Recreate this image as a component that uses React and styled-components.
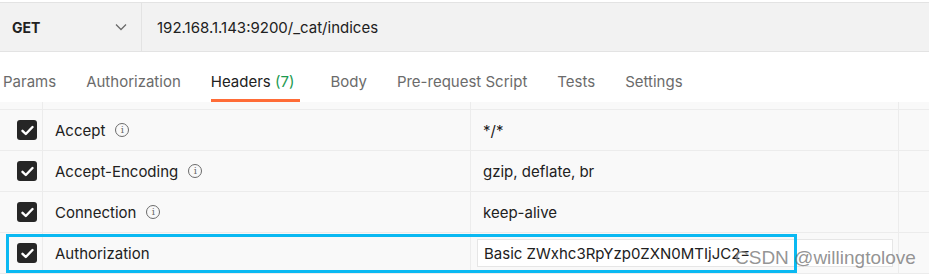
import styled, { createGlobalStyle } from "styled-components";

const GlobalStyle = createGlobalStyle`
  body {
    margin: 0;
    background: #ffffff;
    font-family: Inter, "Noto Sans", "Liberation Sans", sans-serif;
    font-size: 15px;
    color: #212121;
  }
`;

const Page = styled.div`
  width: 929px;
  height: 279px;
  overflow: hidden;
  padding-top: 2px;
  box-sizing: border-box;
  position: relative;
`;

const UrlBar = styled.div`
  display: flex;
  height: 50px;
  background: #f2f2f2;
  border-top: 1px solid #e3e3e3;
  border-bottom: 1px solid #e3e3e3;
  box-sizing: border-box;
`;

const MethodSelect = styled.div`
  width: 142px;
  flex: 0 0 142px;
  display: flex;
  align-items: center;
  justify-content: space-between;
  padding: 0 14px 0 12px;
  box-sizing: border-box;
  border-right: 1px solid #e3e3e3;
  font-weight: 700;
  font-size: 14px;
  color: #212121;
`;

const UrlText = styled.div`
  display: flex;
  align-items: center;
  padding-left: 15px;
  color: #212121;
`;

const Tabs = styled.div`
  display: flex;
  gap: 30px;
  height: 50px;
  padding-left: 3px;
  align-items: center;
  padding-top: 10px;
  box-sizing: border-box;
`;

const Tab = styled.div`
  position: relative;
  color: ${(p) => (p.$active ? "#212121" : "#6b6b6b")};
  line-height: 20px;

  &::after {
    content: "";
    display: ${(p) => (p.$active ? "block" : "none")};
    position: absolute;
    left: 0;
    right: 0;
    bottom: -10px;
    height: 3px;
    background: #ff6c37;
  }
`;

const Count = styled.span`
  color: #1c9a4f;
  margin-right: 6px;
`;

const Table = styled.div`
  background: #f9f9f9;
`;

const Row = styled.div`
  display: grid;
  grid-template-columns: 43px 428px 428px 30px;
  height: ${(p) => p.$h || 41}px;
  border-bottom: 1px solid #ececec;
  box-sizing: border-box;
`;

const Cell = styled.div`
  display: flex;
  align-items: center;
  border-right: ${(p) => (p.$last ? "none" : "1px solid #ececec")};
  padding-left: ${(p) => p.$pad || 0}px;
  color: #212121;
  min-width: 0;
`;

const Checkbox = styled.div`
  width: 20px;
  height: 20px;
  border-radius: 3px;
  background: #262626;
  display: flex;
  align-items: center;
  justify-content: center;
`;

const InfoIcon = styled.span`
  width: 14px;
  height: 14px;
  border: 1.2px solid #6b6b6b;
  border-radius: 50%;
  margin-left: 10px;
  display: inline-flex;
  align-items: center;
  justify-content: center;
  font-family: "DejaVu Serif", serif;
  font-size: 10px;
  color: #6b6b6b;
  line-height: 1;
  box-sizing: border-box;
`;

const ValueInput = styled.div`
  margin-left: 6px;
  width: 416px;
  height: 28px;
  background: #ffffff;
  border: 1px solid #e6e6e6;
  box-sizing: border-box;
  display: flex;
  align-items: center;
  padding-left: 6px;
  overflow: hidden;
  white-space: nowrap;
`;

const Highlight = styled.div`
  position: absolute;
  left: 6px;
  top: 234px;
  width: 791px;
  height: 39px;
  border: 3px solid #0ab9f2;
  box-sizing: border-box;
  pointer-events: none;
`;

const Watermark = styled.div`
  position: absolute;
  left: 735px;
  top: 247px;
  font-family: "Liberation Sans", Arial, sans-serif;
  font-size: 19px;
  color: rgba(120, 120, 120, 0.8);
`;

function Check() {
  return (
    <svg width="13" height="11" viewBox="0 0 13 11">
      <path
        d="M1.5 5.8 L4.8 9 L11.5 2"
        fill="none"
        stroke="#fff"
        strokeWidth="2.4"
        strokeLinecap="round"
        strokeLinejoin="round"
      />
    </svg>
  );
}

function Chevron() {
  return (
    <svg width="12" height="8" viewBox="0 0 12 8">
      <path d="M1 1.5 L6 6.5 L11 1.5" fill="none" stroke="#6b6b6b" strokeWidth="1.3" />
    </svg>
  );
}

const headers = [
  { key: "Accept", value: "*/*", info: true },
  { key: "Accept-Encoding", value: "gzip, deflate, br", info: true },
  { key: "Connection", value: "keep-alive", info: true },
  { key: "Authorization", value: "Basic ZWxhc3RpYzp0ZXN0MTIjJC2=", input: true },
];

const tabs = ["Params", "Authorization", "Headers", "Body", "Pre-request Script", "Tests", "Settings"];

export default function App() {
  return (
    <Page>
      <GlobalStyle />
      <UrlBar>
        <MethodSelect>
          GET
          <Chevron />
        </MethodSelect>
        <UrlText>192.168.1.143:9200/_cat/indices</UrlText>
      </UrlBar>
      <Tabs>
        {tabs.map((t) => (
          <Tab key={t} $active={t === "Headers"}>
            {t}
            {t === "Headers" && (
              <>
                {" "}
                <Count>(7)</Count>
              </>
            )}
          </Tab>
        ))}
      </Tabs>
      <Table>
        <Row $h={8}>
          <Cell />
          <Cell />
          <Cell />
          <Cell $last />
        </Row>
        {headers.map((h) => (
          <Row key={h.key}>
            <Cell $pad={17}>
              <Checkbox>
                <Check />
              </Checkbox>
            </Cell>
            <Cell $pad={12}>
              {h.key}
              {h.info && <InfoIcon>i</InfoIcon>}
            </Cell>
            <Cell $pad={h.input ? 0 : 12}>
              {h.input ? <ValueInput>{h.value}</ValueInput> : h.value}
            </Cell>
            <Cell $last />
          </Row>
        ))}
      </Table>
      <Highlight />
      <Watermark>CSDN @willingtolove</Watermark>
    </Page>
  );
}
